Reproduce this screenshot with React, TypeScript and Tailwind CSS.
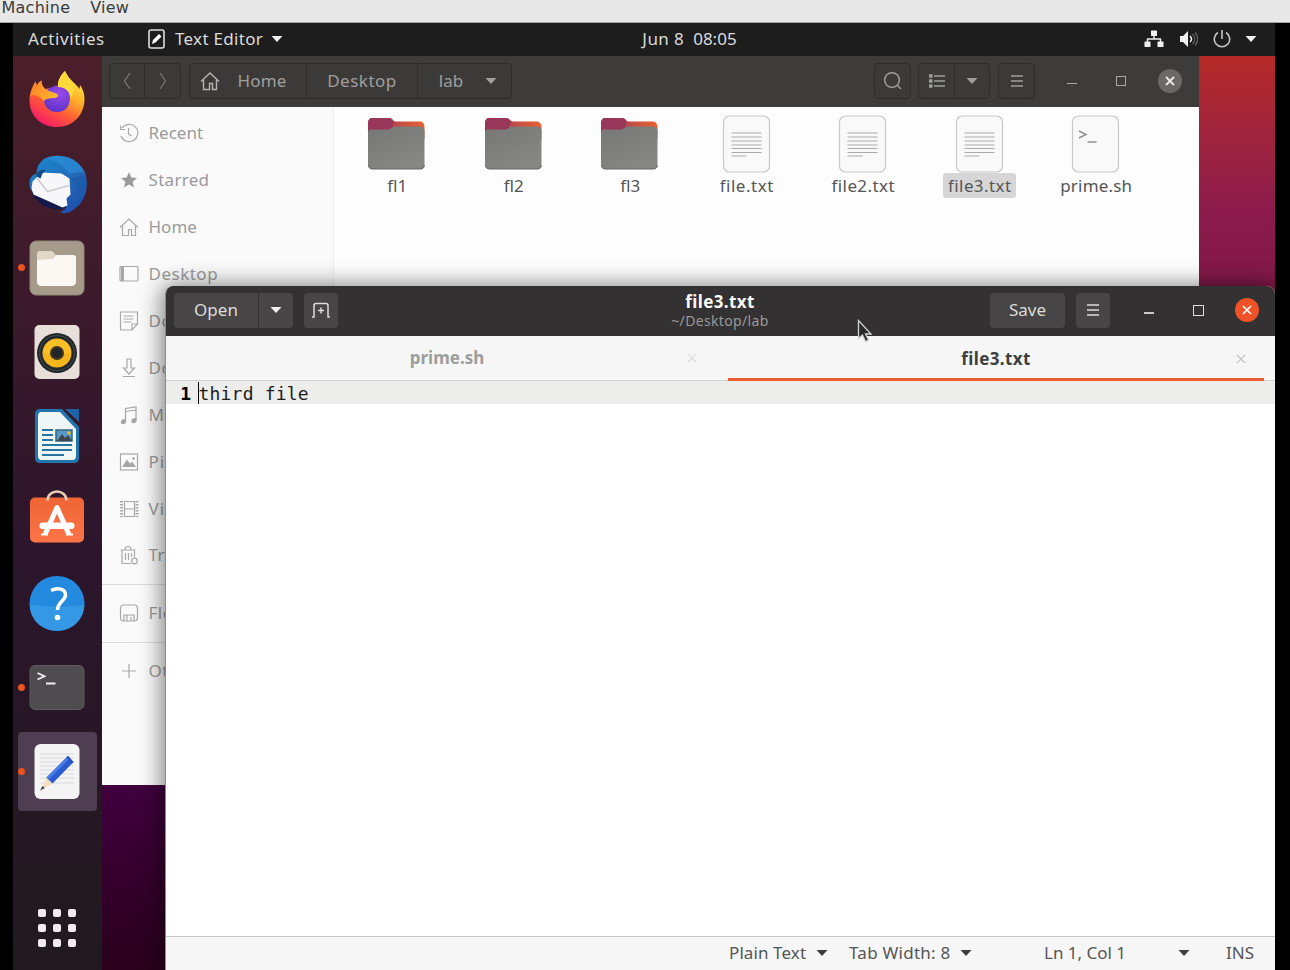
import type { ReactNode } from 'react';

const Caret = ({ className = '' }: { className?: string }) => (
  <svg width="12" height="8" viewBox="0 0 12 8" className={`shrink-0 ${className}`}>
    <path d="M0.5 1h11L6 7z" fill="currentColor" />
  </svg>
);

/* ---------- dock icons, all on a 60x60 canvas ---------- */

const Firefox = () => (
  <svg width="60" height="60" viewBox="0 0 60 60">
    <defs>
      <linearGradient id="fxBody" x1="0.85" y1="0.05" x2="0.25" y2="1">
        <stop offset="0" stopColor="#fff04a" />
        <stop offset="0.35" stopColor="#ffb028" />
        <stop offset="0.65" stopColor="#ff5a36" />
        <stop offset="1" stopColor="#f5156c" />
      </linearGradient>
      <radialGradient id="fxCore" cx="0.6" cy="0.3" r="0.8">
        <stop offset="0" stopColor="#9a4bea" />
        <stop offset="1" stopColor="#5a2fc8" />
      </radialGradient>
      <linearGradient id="fxHead" x1="0" y1="0" x2="1" y2="0.6">
        <stop offset="0" stopColor="#ff7a2a" />
        <stop offset="1" stopColor="#ffb52c" />
      </linearGradient>
    </defs>
    <g transform="translate(0 -1)">
      <path d="M38 2C35 5 30 11 31 18L18 20C16 18 14 15 14.500 11.500C12 13 10.500 15 10 17L8.500 12.500C5 18 2 25 2.500 33C3.500 48 15 58 30 58C46 58 57 46 57.500 31C57.700 25 56 20 53 16L52.500 20C49 15 47.500 14.500 44 11C41 8 39.500 5 38 2Z" fill="url(#fxBody)" />
      <path d="M25 18C33 14 43 19 43 28C43 38 38 43 30 43C22 43 17 37 17 31C17 25 19 20 25 18Z" fill="url(#fxCore)" />
      <path d="M10 17L8.500 12.500C7 16 4 21 3.300 28C6 24 12 26 17 32C20 29 24 29 28 29C32 28 32 25 28 24C23 22 19 21 18 20C16 18 14 15 14.500 11.500C12 13 10.500 15 10 17Z" fill="url(#fxHead)" />
      <path d="M38 2C35 5 30 11 31 18C38 18 43 22 43 29C47 26 50 17 44 11C41 8 39.500 5 38 2Z" fill="#ffd83a" />
    </g>
  </svg>
);

const Thunderbird = () => (
  <svg width="60" height="60" viewBox="0 0 60 60">
    <defs>
      <linearGradient id="tbBody" x1="0.2" y1="0" x2="0.8" y2="1">
        <stop offset="0" stopColor="#1b86cf" />
        <stop offset="0.55" stopColor="#2367b4" />
        <stop offset="1" stopColor="#1d4fae" />
      </linearGradient>
    </defs>
    <g transform="translate(0.500 0.500)">
      <path d="M17 4C29-2 49 1 57 17C63 32 57 49 45 56C41 58.500 36 59.500 33 58C35 57 36 56 36 55C20 54 5 44 2 31C1 24 5 20 9 19C9 12 13 7 17 4Z" fill="url(#tbBody)" />
      <path d="M4 38C8 48 18 56 37 55L40 50L8 37Z" fill="#17194d" />
      <path d="M5 27L14 18L34 19L42 24L43 40L39 44L40 51L35 53L6 40L4 34Z" fill="#f7f7f9" />
      <path d="M9 23L20 37L42 31" fill="none" stroke="#c7c8cd" strokeWidth="1.300" />
      <path d="M9 19C13 14 18 15 18 16L15 19L13 24L9 22Z" fill="#0f4b86" />
      <path d="M18 4C27 6 36 10 41 19L57 17C49 1 29-2 18 4Z" fill="#2f94dd" opacity="0.550" />
      <path d="M43 24C49 22 54 20 58 20C61 33 56 43 49 49C52 41 49 30 43 24Z" fill="#1b5aa8" opacity="0.600" />
    </g>
  </svg>
);

const FilesApp = () => (
  <svg width="60" height="60" viewBox="0 0 60 60">
    <rect x="3" y="3" width="54" height="54" rx="6" fill="#a69b8a" />
    <rect x="3" y="3" width="54" height="54" rx="6" fill="none" stroke="#8f8576" strokeWidth="1" />
    <path d="M10 16c0-2 1-3 3-3h12l4 4h17c2 0 3 1 3 3v4H10z" fill="#e2d8c8" />
    <path d="M10 22l16-1c1 0 2-4 5-4h14c3 0 4 1 4 3v24c0 2-2 4-4 4H14c-2 0-4-2-4-4z" fill="#fbf8f3" />
  </svg>
);

const Rhythmbox = () => (
  <svg width="60" height="60" viewBox="0 0 60 60">
    <rect x="7.500" y="3" width="45" height="54" rx="5" fill="#e8dfdb" />
    <circle cx="30" cy="31" r="20" fill="#23282b" />
    <circle cx="30" cy="31" r="17.500" fill="none" stroke="#41494c" strokeWidth="1" />
    <circle cx="30" cy="31" r="14.500" fill="#f4b51d" />
    <path d="M16 31a14 14 0 0 1 28 0z" fill="#fcc62e" opacity="0.600" />
    <circle cx="30" cy="31" r="7" fill="#40351f" />
    <circle cx="30" cy="31" r="5" fill="#222628" />
  </svg>
);

const Writer = () => (
  <svg width="60" height="60" viewBox="0 0 60 60">
    <path d="M13 3h22l17 18v31c0 3-2 5-5 5H13c-3 0-5-2-5-5V8c0-3 2-5 5-5z" fill="#2075ad" />
    <path d="M38 3h14v13z" fill="#1c62a4" />
    <path d="M14 6h19l16 17v27c0 2-1 4-3 4H14c-2 0-3-2-3-4V10c0-2 1-4 3-4z" fill="#f0f5f8" />
    <path d="M15 24h11M15 29h11M15 34h11M15 39h30M15 44h30M15 49h22" stroke="#28769f" strokeWidth="2" />
    <rect x="29" y="24" width="16" height="11" fill="#5999c7" stroke="#316783" strokeWidth="1.500" />
    <path d="M30 35l5-7 3 4 3-3 4 6z" fill="#41464a" />
    <circle cx="42" cy="27" r="1.800" fill="#e5b82d" />
  </svg>
);

const Software = () => (
  <svg width="60" height="60" viewBox="0 0 60 60">
    <defs>
      <linearGradient id="swBag" x1="0" y1="0" x2="0" y2="1">
        <stop offset="0" stopColor="#ef6534" />
        <stop offset="1" stopColor="#fb7448" />
      </linearGradient>
    </defs>
    <g transform="translate(0 -3.500)">
      <rect x="3" y="11" width="54" height="45" rx="5" fill="url(#swBag)" />
      <path d="M20.500 14C21 2 39 2 39.500 14" fill="none" stroke="#eacdb5" strokeWidth="2.500" />
      <path d="M18 48L30 21L42 48" fill="none" stroke="#fff" strokeWidth="5" strokeLinejoin="round" />
      <rect x="12.500" y="36" width="35" height="6.500" rx="3" fill="#fff" />
      <path d="M14 48h7M39 48h7" stroke="#fff" strokeWidth="2" />
    </g>
  </svg>
);

const Help = () => (
  <svg width="60" height="60" viewBox="0 0 60 60">
    <circle cx="30" cy="29.500" r="27.500" fill="#248ae0" />
    <path d="M2.700 30.500C4 65.500 56 65.500 57.300 30.500C40 33.500 20 33.500 2.700 30.500Z" fill="#3498e4" />
    <path d="M24 16.500C31 13 38.500 15 38.500 21C38.500 26.500 30.500 28 30.500 36" fill="none" stroke="#fff" strokeWidth="3.500" />
    <circle cx="30.500" cy="43.500" r="2.800" fill="#fff" />
  </svg>
);

const Terminal = () => (
  <svg width="60" height="60" viewBox="0 0 60 60">
    <rect x="3" y="7.500" width="54" height="44" rx="5" fill="#4e4c4e" stroke="#666365" strokeWidth="0.800" />
    <path d="M10.500 15L17.500 18.200L10.500 21.500" fill="none" stroke="#f2f2f2" strokeWidth="1.800" />
    <path d="M19 25.500h9.500" stroke="#f2f2f2" strokeWidth="2" />
  </svg>
);

const TextEditor = () => (
  <svg width="60" height="60" viewBox="0 0 60 60">
    <rect x="7.500" y="2" width="45" height="55" rx="6" fill="#f5f4f5" />
    <path d="M13 12h34M13 16h34M13 20h34M13 24h34M13 28h34M13 32h34M13 36h34M13 41h34" stroke="#d9d8dc" strokeWidth="1" />
    <path d="M19.500 36L14 47.500L25.500 41.500Z" fill="#f2ddc0" />
    <path d="M15.600 44L13 48.500L17.800 46Z" fill="#3b3b40" />
    <path d="M19.500 35.500L41 14L46.500 20L25.500 41.500Z" fill="#2a5bd0" />
    <path d="M19.500 35.500L41 14L43 16.200L21.500 37.700Z" fill="#4a7be6" />
    <path d="M39.500 15.500L41 14L46.500 20L45 21.500Z" fill="#2c50ad" />
  </svg>
);

const dock: { icon: ReactNode; running?: boolean; active?: boolean }[] = [
  { icon: <Firefox /> },
  { icon: <Thunderbird /> },
  { icon: <FilesApp />, running: true },
  { icon: <Rhythmbox /> },
  { icon: <Writer /> },
  { icon: <Software /> },
  { icon: <Help /> },
  { icon: <Terminal />, running: true },
  { icon: <TextEditor />, running: true, active: true },
];

const Dock = () => (
  <nav className="flex w-[89px] shrink-0 flex-col bg-linear-to-b from-[#4b1e2a] via-[#2c152b] via-55% to-[#201a1e] pt-0.5">
    {dock.map((item, i) => (
      <div key={i} className="flex h-[84px] items-center pb-px">
        <div className={`ml-[4.500px] flex h-[79px] w-[79px] items-center rounded ${item.active ? 'bg-[#4f3e51]' : ''}`}>
          <span className={`h-[7px] w-[7px] shrink-0 rounded-full ${item.running ? 'bg-[#e95420]' : ''}`} />
          <span className="ml-[2px] shrink-0">{item.icon}</span>
        </div>
      </div>
    ))}
    <div className="mt-auto mb-[23px] ml-[25px] grid w-[38px] grid-cols-3 gap-[7px]">
      {Array.from({ length: 9 }, (_, i) => (
        <span key={i} className="h-2 w-2 rounded-[2px] bg-[#f3e9f1]" />
      ))}
    </div>
  </nav>
);

/* ---------- sidebar icons, 20x20 ---------- */

const Sym = ({ children }: { children: ReactNode }) => (
  <svg width="20" height="20" viewBox="0 0 20 20" fill="none" stroke="#a8a8a8" strokeWidth="1.200" className="shrink-0">
    {children}
  </svg>
);

const house = (
  <>
    <path d="M1 10.500L10 2l9 8.500" />
    <path d="M3.500 9v9.500h6v-6h3v6h4V9" />
  </>
);

const places: [string, ReactNode, string][] = [
  ['Recent', <><path d="M3 5a8.700 8.700 0 1 1-1 8" /><path d="M1.500 2.500V6.500H6M9.500 5v6l3 2" /></>, ''],
  ['Starred', <path d="M10 2l2.300 5.400 5.700.5-4.400 3.800 1.400 5.800-5-3.100-5 3.100 1.400-5.800L2 7.900l5.700-.5z" fill="#9a9a9a" stroke="none" />, 'tracking-[0.3px]'],
  ['Home', house, ''],
  ['Desktop', <><rect x="1" y="2.500" width="18" height="14.500" rx="1" /><path d="M3.500 3v14" strokeWidth="3" /></>, 'tracking-[0.5px]'],
  ['Documents', <><path d="M1.500 1h17v12l-5.500 6H1.500zM18 13h-5v6" /><path d="M4.500 5h10M4.500 8h10M4.500 11h8" /></>, 'tracking-[0.5px]'],
  ['Downloads', <path d="M8 1h4v9h3.500L10 16 4.500 10H8zM4 18.500h12" />, 'tracking-[0.5px]'],
  ['Music', <><path d="M6.500 16V3.500L17 2v13M6.500 6.500L17 5" /><path d="M6.500 14.500v2c0 3-5 2.500-4 0 .5-1.500 2-2 4-2zM17 13.500v2c0 3-5 2.500-4 0 .5-1.500 2-2 4-2z" fill="#a3a3a3" /></>, 'tracking-[1px]'],
  ['Pictures', <><rect x="1.500" y="2" width="17" height="16" /><path d="M4 14.500l4-6 3 4 2-2 3 4z" fill="#a3a3a3" /><path d="M14.500 5v3M13 6.500h3" /></>, 'tracking-[1px]'],
  ['Videos', <><path d="M5.500 2.500h10v15h-10zM5.500 10h10" /><path d="M2.500 2v16M18 2v16" strokeWidth="3" strokeDasharray="1.500 1.500" /></>, 'tracking-[1px]'],
  ['Trash', <><path d="M1.500 5h15M6 4.500C6 .5 12 .5 12 4.500M3 5v13.500h9M15.500 5v7" /><path d="M6.500 8v7M9.500 8v7M12.500 8v4" /><circle cx="15.500" cy="16" r="2.800" /></>, 'tracking-[0.5px]'],
];

const PlaceRow = ({ label, icon, cls = '' }: { label: string; icon: ReactNode; cls?: string }) => (
  <div className="flex h-[46.900px] shrink-0 items-center gap-[10px] pl-[16.500px] text-[#9b9b9b]">
    <Sym>{icon}</Sym>
    <span className={`whitespace-nowrap ${cls}`}>{label}</span>
  </div>
);

/* ---------- file grid ---------- */

const Folder = () => (
  <svg width="60" height="60" viewBox="0 0 60 60">
    <defs>
      <linearGradient id="folderBack" x1="0" y1="0" x2="1" y2="0">
        <stop offset="0" stopColor="#8f3258" />
        <stop offset="0.450" stopColor="#b8494a" />
        <stop offset="1" stopColor="#e9622f" />
      </linearGradient>
      <linearGradient id="folderFront" x1="0" y1="0" x2="0.600" y2="1">
        <stop offset="0" stopColor="#777776" />
        <stop offset="1" stopColor="#868685" />
      </linearGradient>
    </defs>
    <path d="M2 9c0-3 1.500-5 4.500-5H23c3 0 4 3.500 7 3.500h23c3.500 0 5.500 2 5.500 5.500v12H2z" fill="url(#folderBack)" />
    <path d="M2 9c0-3 1.500-5 4.500-5H23c3 0 4 2 4.500 4s-2 8-5.500 8H2z" fill="#98375a" />
    <path d="M2 19c0-2 1-3.500 3-3.500h17c3 0 4-3 7-3h25c3 0 4.500 1.500 4.500 4.500V51c0 2.500-1.500 4-4 4H6c-2.500 0-4-1.500-4-4z" fill="url(#folderFront)" />
    <path d="M2.500 51.500c.5 2.500 2 3.500 4 3.500h48c2 0 3.500-1 4-3.500" fill="none" stroke="#666664" />
  </svg>
);

const Sheet = ({ script = false }: { script?: boolean }) => (
  <svg width="60" height="60" viewBox="0 0 60 60">
    <rect x="7.500" y="2" width="46" height="56" rx="6" fill="#f9f9f9" stroke="#c8c8c8" strokeWidth="1.200" />
    {script ? (
      <path d="M14 17l7 3.500-7 3.500M22.500 28h9" fill="none" stroke="#909090" strokeWidth="1.400" />
    ) : (
      <path d="M15.500 19h30M15.500 23h30M15.500 27h30M15.500 31h30M15.500 34.500h30M15.500 38.500h30M15.500 42h15" stroke="#a9a9a9" strokeWidth="1.100" />
    )}
  </svg>
);

const files: [string, ReactNode, string][] = [
  ['fl1', <Folder />, ''],
  ['fl2', <Folder />, ''],
  ['fl3', <Folder />, ''],
  ['file.txt', <Sheet />, 'tracking-[0.5px]'],
  ['file2.txt', <Sheet />, 'tracking-[0.4px]'],
  ['file3.txt', <Sheet />, 'tracking-[0.4px] bg-[#d6d6d6]'],
  ['prime.sh', <Sheet script />, 'tracking-[0.2px]'],
];

const darkBtn = 'flex h-9 items-center justify-center border border-[#2d2d2c] bg-[#3b3a39]';

const Menu = () => (
  <svg width="14" height="14" viewBox="0 0 14 14" fill="none" stroke="currentColor" strokeWidth="1.400">
    <path d="M1 2h12M1 7h12M1 12h12" />
  </svg>
);

const FilesWindow = () => (
  <section className="absolute top-0 left-[89px] flex h-[729px] w-[1097px] flex-col bg-[#fdfdfd]">
    <header className="flex h-[51px] shrink-0 items-center bg-[#3d3c3b] pb-[2px] pl-[7px] text-[#a09f9e]">
      <div className="flex">
        <span className={`${darkBtn} w-9 rounded-l`}>
          <svg width="8" height="18" viewBox="0 0 8 18" fill="none" stroke="#777" strokeWidth="1.300"><path d="M7 1L1.500 9 7 17" /></svg>
        </span>
        <span className={`${darkBtn} -ml-px w-[37px] rounded-r`}>
          <svg width="8" height="18" viewBox="0 0 8 18" fill="none" stroke="#777" strokeWidth="1.300"><path d="M1 1l5.500 8L1 17" /></svg>
        </span>
      </div>
      <div className="ml-2 flex">
        <span className={`${darkBtn} w-[118px] gap-[17px] rounded-l pr-[9px]`}>
          <svg width="20" height="20" viewBox="0 0 20 20" fill="none" stroke="#b5b4b3" strokeWidth="1.400">{house}</svg>
          <span className="tracking-[0.2px]">Home</span>
        </span>
        <span className={`${darkBtn} -ml-px w-[112px] tracking-[0.5px]`}>Desktop</span>
        <span className={`${darkBtn} -ml-px w-[95px] gap-[22px] rounded-r pl-[7px]`}>
          lab
          <Caret />
        </span>
      </div>
      <div className="ml-auto flex items-center">
        <span className={`${darkBtn} w-[37px] rounded`}>
          <svg width="20" height="20" viewBox="0 0 20 20" fill="none" stroke="currentColor" strokeWidth="1.500">
            <circle cx="9" cy="9" r="7.300" /><path d="M14 14l4 4" />
          </svg>
        </span>
        <span className={`${darkBtn} ml-[7px] w-[37px] rounded-l`}>
          <svg width="18" height="16" viewBox="0 0 18 16" fill="none" stroke="currentColor" strokeWidth="1.600">
            <path d="M6 3h11M6 8h11M6 13h11" /><path d="M1 3h3.500M1 8h3.500M1 13h3.500" strokeWidth="3.500" />
          </svg>
        </span>
        <span className={`${darkBtn} -ml-px w-9 rounded-r`}><Caret /></span>
        <span className={`${darkBtn} ml-2 w-[37px] rounded`}><Menu /></span>
      </div>
      <div className="mr-[17px] ml-[32px] flex items-center text-[#a8a7a6]">
        <span className="mt-[5px] h-px w-2.5 bg-current" />
        <span className="ml-[39px] h-[10px] w-[10px] border border-current" />
        <span className="ml-[32px] flex h-6 w-6 items-center justify-center rounded-full bg-[#6a6968] text-[#ecebea]">
          <svg width="10" height="10" viewBox="0 0 10 10" stroke="currentColor" strokeWidth="1.800"><path d="M1 1l8 8M9 1L1 9" /></svg>
        </span>
      </div>
    </header>
    <div className="flex min-h-0 flex-1">
      <aside className="flex w-[232px] shrink-0 flex-col border-r border-[#ececec] bg-[#fafafa] pt-[3px]">
        {places.map(([label, icon, cls]) => (
          <PlaceRow key={label} label={label} icon={icon} cls={cls} />
        ))}
        <hr className="mt-[5px] mb-[5px] border-[#dcdcdc]" />
        <PlaceRow label="Floppy Disk" cls="tracking-[0.5px]" icon={<><rect x="1.500" y="2" width="17" height="16" rx="3" /><path d="M5 18v-6h10v6M8 12v6M12 14v4" /></>} />
        <hr className="mt-[5px] mb-[5px] border-[#dcdcdc]" />
        <PlaceRow label="Other Locations" cls="tracking-[0.5px]" icon={<path d="M10 3v14M3 10h14" />} />
      </aside>
      <div className="flex pt-[7px] pl-[4px]">
        {files.map(([name, icon, cls]) => (
          <div key={name} className="flex w-[116.500px] flex-col items-center text-[#555]">
            {icon}
            <span className={`relative left-px mt-[-1.500px] h-[25px] rounded-[3px] px-[5px] leading-[25px] ${cls}`}>{name}</span>
          </div>
        ))}
      </div>
    </div>
  </section>
);

const lightBtn = 'flex h-[35px] items-center justify-center bg-[#474545]';

const TabClose = ({ className = '' }: { className?: string }) => (
  <svg width="10" height="10" viewBox="0 0 10 10" stroke="currentColor" strokeWidth="1.200" className={`shrink-0 ${className}`}>
    <path d="M1 1l8 8M9 1L1 9" />
  </svg>
);

const EditorWindow = () => (
  <section className="absolute top-[230px] left-[152px] flex h-[684px] w-[1110px] flex-col overflow-hidden rounded-t-lg border-l border-[#8c8c8c] bg-white">
    <header className="relative flex h-[50px] shrink-0 items-center bg-[#333131] pb-[2px] pl-2 text-[#dcdcdc]">
      <span className={`${lightBtn} w-[84px] rounded-l`}>Open</span>
      <span className={`${lightBtn} ml-px w-[34px] rounded-r text-[#f2f2f2]`}><Caret /></span>
      <span className={`${lightBtn} ml-[11px] w-[34px] rounded`}>
        <svg width="18" height="16" viewBox="0 0 18 16" fill="none" stroke="currentColor" strokeWidth="1.500">
          <path d="M0 15h2V3.500C2 2 2.500 1.500 4 1.500h10c1.500 0 2 .5 2 2V15h2M9 5.500v6M6 8.500h6" />
        </svg>
      </span>
      <div className="ml-[333px] flex w-[98px] flex-col items-center pt-px whitespace-nowrap">
        <span className="leading-[19px] font-bold tracking-[0.4px] text-[#fafafa]">file3.txt</span>
        <span className="text-[14px] leading-[19px] tracking-[0.35px] text-[#9a9999]">~/Desktop/lab</span>
      </div>
      <div className="ml-auto flex items-center">
        <span className={`${lightBtn} w-[75px] rounded`}>Save</span>
        <span className={`${lightBtn} ml-[11px] w-[34px] rounded`}><Menu /></span>
        <span className="mt-[6px] ml-[34px] h-0.5 w-2.5 bg-current opacity-90" />
        <span className="ml-[39px] h-[11px] w-[11px] border-[1.500px] border-current" />
        <span className="mr-4 ml-[31px] flex h-6 w-6 items-center justify-center rounded-full bg-[#ef5226] text-white">
          <svg width="10" height="10" viewBox="0 0 10 10" stroke="currentColor" strokeWidth="1.700"><path d="M1 1l8 8M9 1L1 9" /></svg>
        </span>
      </div>
    </header>
    <div className="flex h-[45px] shrink-0 border-b border-[#d3d3d3] bg-[#f6f6f6] font-bold">
      <div className="flex w-[562px] items-center">
        <span className="w-full pl-[41px] text-center text-[#9c9e9b]">prime.sh</span>
        <TabClose className="mr-[31px] text-[#dcdcdc]" />
      </div>
      <div className="mr-[11px] flex h-[45px] flex-1 items-center border-b-3 border-[#e95c30] pt-[3px]">
        <span className="w-full pl-[28px] text-center tracking-[0.4px] text-[#3c3f3d]">file3.txt</span>
        <TabClose className="mr-[18px] text-[#c4c4c4]" />
      </div>
    </div>
    <div className="flex h-[23px] shrink-0 items-center bg-[#ededec] font-['DejaVu_Sans_Mono','Liberation_Mono',monospace] text-[18px] text-[#1c1c1c]">
      <span className="w-[25px] pt-[3px] text-right font-bold text-black">1</span>
      <span className="ml-[6.500px] h-[22px] w-px shrink-0 bg-black" />
      <span className="pt-[3px] tracking-[0.2px]">third file</span>
    </div>
    <div className="flex-1 bg-white" />
    <footer className="flex h-[34px] shrink-0 items-center border-t border-[#c6c6c6] bg-[#f6f6f6] pb-[2px] pl-[563px] text-[#555]">
      <span className="w-[79px] whitespace-nowrap tracking-[0.1px]">Plain Text</span>
      <Caret className="ml-2 text-[#3c3c3c]" />
      <span className="ml-[21px] w-[104px] whitespace-nowrap tracking-[0.25px]">Tab Width: 8</span>
      <Caret className="ml-[7px] text-[#3c3c3c]" />
      <span className="ml-[72px] w-[83px] whitespace-nowrap">Ln 1, Col 1</span>
      <Caret className="ml-[51px] text-[#3c3c3c]" />
      <span className="ml-[36px]">INS</span>
    </footer>
  </section>
);

const TopBar = () => (
  <header className="grid h-[33px] shrink-0 grid-cols-3 items-center bg-[#1d1d1d] pb-[2px] text-[#dadada]">
    <div className="flex items-center pl-[15px]">
      <span className="w-[77px] tracking-[0.6px]">Activities</span>
      <svg width="17" height="20" viewBox="0 0 17 20" fill="none" stroke="#dedede" strokeWidth="1.600" className="ml-[43px]">
        <rect x="1" y="1" width="15" height="18" rx="2" />
        <path d="M4 15l1-4 6-6 2.500 2.500-6 6z" fill="#fff" stroke="none" />
      </svg>
      <span className="ml-[10px] w-[90px] tracking-[0.3px]">Text Editor</span>
      <Caret className="ml-[6px] text-[#f0f0f0]" />
    </div>
    <div className="flex justify-center gap-[9px] pl-[91px] whitespace-nowrap">
      <span className="tracking-[0.4px]">Jun 8</span>
      <span>08:05</span>
    </div>
    <div className="flex items-center justify-end pr-[18px] text-[#f0f0f0]">
      <svg width="20" height="18" viewBox="0 0 20 18" fill="currentColor">
        <rect x="7" y="0.500" width="6" height="5.500" rx="0.500" /><rect x="0.500" y="11.500" width="6" height="5.500" rx="0.500" /><rect x="13.500" y="11.500" width="6" height="5.500" rx="0.500" />
        <path d="M10 6v3M3.500 12V9h13v3" fill="none" stroke="currentColor" strokeWidth="1.400" />
      </svg>
      <svg width="19" height="18" viewBox="0 0 19 18" fill="none" className="ml-[15px]">
        <path d="M1 6h3l5-5v16l-5-5H1z" fill="currentColor" />
        <path d="M11 6c2 2 2 4 0 6" stroke="currentColor" strokeWidth="1.500" />
        <path d="M13.500 4c3 3 3 7 0 10M16 2.500c3.500 4 3.500 9 0 13" stroke="#666" strokeWidth="1.200" />
      </svg>
      <svg width="18" height="18" viewBox="0 0 18 18" fill="none" stroke="#c6c6c6" strokeWidth="1.600" className="ml-[15px]">
        <path d="M5 2.500a7.700 7.700 0 1 0 8 0M9 0v9" />
      </svg>
      <Caret className="ml-[14px]" />
    </div>
  </header>
);

const Cursor = () => (
  <svg width="18" height="26" viewBox="0 0 18 26" className="absolute top-[263px] left-[844px]">
    <path d="M1.500 1.500v18l4-3.500 3 6.500 3-1.500-3-6h5.500z" fill="#2a2a2a" stroke="#d4d4d4" strokeWidth="1.300" />
  </svg>
);

export default function App() {
  return (
    <div className="flex h-[970px] w-[1290px] flex-col overflow-hidden bg-black font-['Noto_Sans','Open_Sans',sans-serif] text-[17px] leading-6">
      <div className="flex h-[23px] shrink-0 gap-5 border-b border-[#a5a5a5] bg-[#e8e8e8] pl-[1.500px] font-['DejaVu_Sans',sans-serif] text-[16px] leading-4 tracking-[0.25px] text-[#3b3b3b]">
        <span>Machine</span>
        <span>View</span>
      </div>
      <div className="ml-[13px] flex w-[1262px] flex-1 flex-col">
        <TopBar />
        <main className="relative flex flex-1 overflow-hidden bg-linear-to-b from-[#b52a25] via-[#8c1b4c] via-17% to-[#26001a]">
          <Dock />
          <div className="h-full flex-1" />
          <div className="absolute top-[729px] left-[89px] h-[185px] w-[64px] bg-linear-to-b from-[#40003e] to-[#2a001c]" />
          <FilesWindow />
          <div className="absolute top-[230px] left-[152px] h-[700px] w-[1110px] rounded-t-lg shadow-[0_2px_22px_3px_rgba(0,0,0,0.5)]" />
          <EditorWindow />
          <Cursor />
        </main>
      </div>
    </div>
  );
}
